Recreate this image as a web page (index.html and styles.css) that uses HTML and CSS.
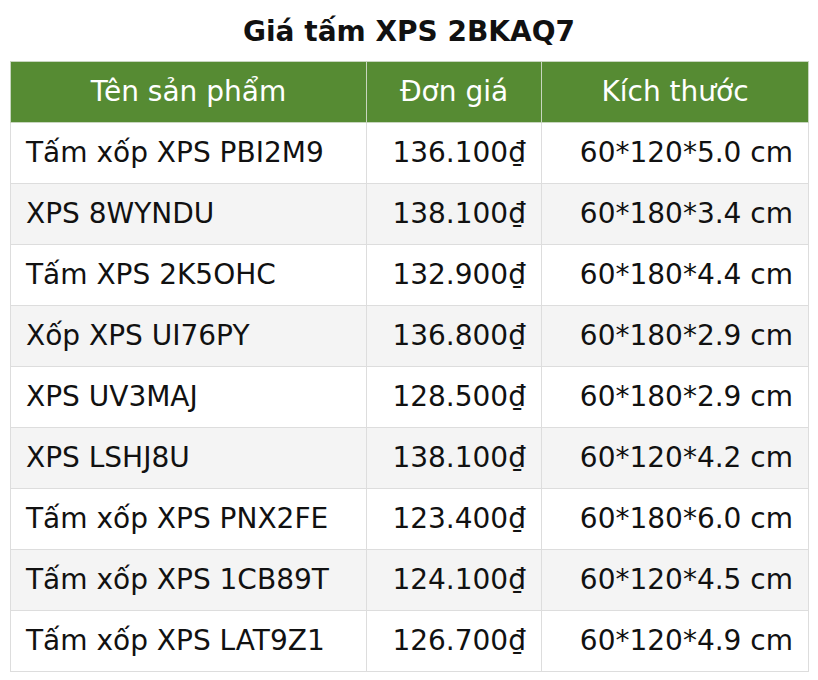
FILE: index.html
```html
<!DOCTYPE html>
<html lang="vi">
<head>
<meta charset="utf-8">
<title>Giá tấm XPS 2BKAQ7</title>
<link rel="stylesheet" href="styles.css">
</head>
<body>
<div class="wrap">
  <h2 class="title">Giá tấm XPS 2BKAQ7</h2>
  <table class="price-table">
    <colgroup>
      <col class="col-name">
      <col class="col-price">
      <col class="col-size">
    </colgroup>
    <thead>
      <tr><th>Tên sản phẩm</th><th>Đơn giá</th><th>Kích thước</th></tr>
    </thead>
    <tbody>
      <tr><td class="c-name">Tấm xốp XPS PBI2M9</td><td class="c-num">136.100₫</td><td class="c-num">60*120*5.0 cm</td></tr>
      <tr><td class="c-name">XPS 8WYNDU</td><td class="c-num">138.100₫</td><td class="c-num">60*180*3.4 cm</td></tr>
      <tr><td class="c-name">Tấm XPS 2K5OHC</td><td class="c-num">132.900₫</td><td class="c-num">60*180*4.4 cm</td></tr>
      <tr><td class="c-name">Xốp XPS UI76PY</td><td class="c-num">136.800₫</td><td class="c-num">60*180*2.9 cm</td></tr>
      <tr><td class="c-name">XPS UV3MAJ</td><td class="c-num">128.500₫</td><td class="c-num">60*180*2.9 cm</td></tr>
      <tr><td class="c-name">XPS LSHJ8U</td><td class="c-num">138.100₫</td><td class="c-num">60*120*4.2 cm</td></tr>
      <tr><td class="c-name">Tấm xốp XPS PNX2FE</td><td class="c-num">123.400₫</td><td class="c-num">60*180*6.0 cm</td></tr>
      <tr><td class="c-name">Tấm xốp XPS 1CB89T</td><td class="c-num">124.100₫</td><td class="c-num">60*120*4.5 cm</td></tr>
      <tr><td class="c-name">Tấm xốp XPS LAT9Z1</td><td class="c-num">126.700₫</td><td class="c-num">60*120*4.9 cm</td></tr>
    </tbody>
  </table>
</div>
</body>
</html>
```
FILE: styles.css
```css
html, body {
  margin: 0;
  padding: 0;
  background: #ffffff;
}
body {
  font-family: Verdana, "DejaVu Sans", sans-serif;
  color: #111111;
}
.wrap {
  padding: 12px 10px 0 10px;
}
.title {
  margin: 0 0 10px 0;
  text-align: center;
  font-size: 28px;
  font-weight: bold;
  line-height: 39px;
  color: #111111;
}
.price-table {
  width: 798px;
  table-layout: fixed;
  border-collapse: collapse;
  font-size: 28px;
}
.col-name { width: 356px; }
.col-price { width: 175px; }
.col-size { width: 267px; }
.price-table tr {
  height: 61px;
}
.price-table th,
.price-table td {
  border: 1px solid #dddddd;
  padding: 0 15px;
  line-height: 32px;
  white-space: nowrap;
}
.price-table th {
  background: #568b33;
  color: #ffffff;
  font-weight: normal;
  text-align: center;
  border-color: #c8d6bf;
}
.c-name { text-align: left; }
.c-num { text-align: right; }
.price-table tbody tr:nth-child(even) td {
  background: #f4f4f4;
}
```
